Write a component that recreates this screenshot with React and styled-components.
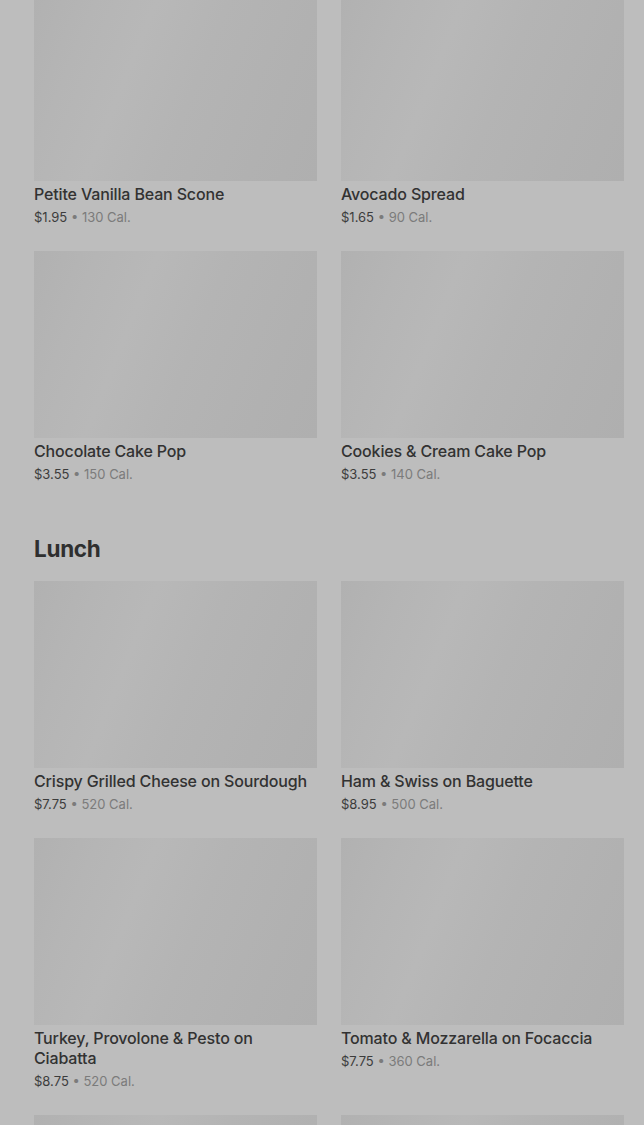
import React from "react";
import styled, { createGlobalStyle } from "styled-components";

const GlobalStyle = createGlobalStyle`
  html, body {
    margin: 0;
    padding: 0;
    background: #bdbdbd;
    overflow: hidden;
    font-family: Inter, "Liberation Sans", sans-serif;
  }
`;

const Page = styled.div`
  width: 644px;
  height: 1125px;
  overflow: hidden;
  background: #bdbdbd;
`;

const Content = styled.div`
  margin-top: -6px;
  padding: 0 20px 0 34px;
`;

const Section = styled.section`
  padding-bottom: 49px;
`;

const SectionTitle = styled.h2`
  margin: 0 0 16px;
  font-size: 22.5px;
  line-height: 32px;
  font-weight: 700;
  color: #2f2f2f;
  letter-spacing: -0.3px;
`;

const Grid = styled.div`
  display: grid;
  grid-template-columns: 1fr 1fr;
  column-gap: 24px;
  row-gap: 24px;
`;

const Card = styled.div`
  display: flex;
  flex-direction: column;
`;

const Thumb = styled.div`
  height: 187px;
  background: linear-gradient(
    112deg,
    #b1b1b1 0%,
    #b5b5b5 18%,
    #b8b8b8 35%,
    #b4b4b4 55%,
    #b1b1b1 80%,
    #afafaf 100%
  );
`;

const Name = styled.div`
  margin-top: 3px;
  font-size: 16px;
  line-height: 20px;
  font-weight: 500;
  color: #323232;
  letter-spacing: -0.15px;
`;

const Meta = styled.div`
  margin-top: 3px;
  font-size: 13px;
  line-height: 20px;
  color: #7b7b7b;
`;

const Price = styled.span`
  color: #3c3c3c;
`;

const sections = [
  {
    title: null,
    items: [
      { name: "Petite Vanilla Bean Scone", price: "$1.95", cal: "130 Cal." },
      { name: "Avocado Spread", price: "$1.65", cal: "90 Cal." },
      { name: "Chocolate Cake Pop", price: "$3.55", cal: "150 Cal." },
      { name: "Cookies & Cream Cake Pop", price: "$3.55", cal: "140 Cal." },
    ],
  },
  {
    title: "Lunch",
    items: [
      { name: "Crispy Grilled Cheese on Sourdough", price: "$7.75", cal: "520 Cal." },
      { name: "Ham & Swiss on Baguette", price: "$8.95", cal: "500 Cal." },
      { name: "Turkey, Provolone & Pesto on Ciabatta", price: "$8.75", cal: "520 Cal." },
      { name: "Tomato & Mozzarella on Focaccia", price: "$7.75", cal: "360 Cal." },
      { id: "lunch-5" },
      { id: "lunch-6" },
    ],
  },
];

export default function App() {
  return (
    <Page>
      <GlobalStyle />
      <Content>
        {sections.map((section, i) => (
          <Section key={i}>
            {section.title && <SectionTitle>{section.title}</SectionTitle>}
            <Grid>
              {section.items.map((item) => (
                <Card key={item.name || item.id}>
                  <Thumb />
                  {item.name && (
                    <>
                      <Name>{item.name}</Name>
                      <Meta>
                        <Price>{item.price}</Price> • {item.cal}
                      </Meta>
                    </>
                  )}
                </Card>
              ))}
            </Grid>
          </Section>
        ))}
      </Content>
    </Page>
  );
}
